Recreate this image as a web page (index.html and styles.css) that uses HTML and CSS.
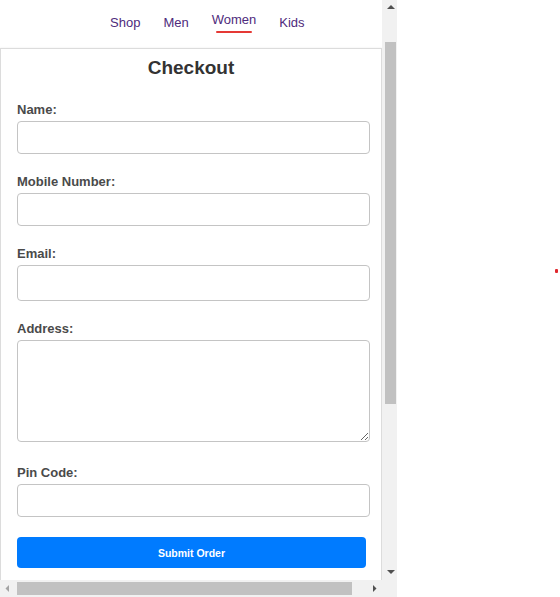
FILE: index.html
```html
<!DOCTYPE html>
<html lang="en">
<head>
<meta charset="utf-8">
<title>Checkout</title>
<link rel="stylesheet" href="styles.css">
</head>
<body>
<div class="frame">
  <div class="page">
    <nav class="nav">
      <a class="nav-link">Shop</a>
      <a class="nav-link">Men</a>
      <a class="nav-link active">Women</a>
      <a class="nav-link">Kids</a>
    </nav>
    <form class="card">
      <h1 class="title">Checkout</h1>
      <div class="field">
        <label class="label">Name:</label>
        <input class="input" type="text">
      </div>
      <div class="field">
        <label class="label">Mobile Number:</label>
        <input class="input" type="text">
      </div>
      <div class="field">
        <label class="label">Email:</label>
        <input class="input input-email" type="text">
      </div>
      <div class="field">
        <label class="label">Address:</label>
        <textarea class="input textarea"></textarea>
      </div>
      <div class="field field-pin">
        <label class="label">Pin Code:</label>
        <input class="input" type="text">
      </div>
      <button class="submit" type="button">Submit Order</button>
    </form>
  </div>
  <div class="vscroll">
    <div class="sb-btn">
      <svg width="15" height="17" viewBox="0 0 15 17"><polygon points="5,9 13,9 9,5" fill="#505050"/></svg>
    </div>
    <div class="vtrack"><div class="vthumb"></div></div>
    <div class="sb-btn">
      <svg width="15" height="17" viewBox="0 0 15 17"><polygon points="5,7 13,7 9,11" fill="#505050"/></svg>
    </div>
  </div>
  <div class="hscroll">
    <div class="sb-btn">
      <svg width="17" height="17" viewBox="0 0 17 17"><polygon points="9,5 9,12 5.5,8.5" fill="#a3a3a3"/></svg>
    </div>
    <div class="htrack"><div class="hthumb"></div></div>
    <div class="sb-btn">
      <svg width="17" height="17" viewBox="0 0 17 17"><polygon points="8,5 8,12 11.5,8.5" fill="#505050"/></svg>
    </div>
  </div>
  <div class="sb-corner"></div>
</div>
<span class="dot"></span>
</body>
</html>
```
FILE: styles.css
```css
* { box-sizing: border-box; }
html, body { margin: 0; padding: 0; background: #fff; }
body { font-family: "Liberation Sans", Arial, sans-serif; position: relative; width: 560px; height: 597px; overflow: hidden; }

.frame {
  position: relative;
  width: 397px;
  height: 597px;
  overflow: hidden;
  background: #fff;
}

/* scrollbars (drawn over the frame edge) */
.vscroll {
  position: absolute;
  left: 382px;
  top: 0;
  width: 15px;
  height: 580px;
  background: #f1f1f1;
  display: flex;
  flex-direction: column;
}
.vscroll .sb-btn { height: 17px; flex: none; }
.vtrack { flex: 1; padding-top: 25px; padding-left: 3px; padding-right: 1px; }
.vthumb { height: 362px; background: #c1c1c1; }
.hscroll {
  position: absolute;
  left: 0;
  top: 580px;
  width: 382px;
  height: 17px;
  background: #f1f1f1;
  display: flex;
}
.hscroll .sb-btn { width: 17px; flex: none; }
.htrack { flex: 1; padding-top: 2px; padding-bottom: 2px; }
.hthumb { width: 335px; height: 100%; background: #c1c1c1; }
.sb-btn svg { display: block; }
.sb-corner {
  position: absolute;
  left: 382px;
  top: 580px;
  width: 15px;
  height: 17px;
  background: #f1f1f1;
}

.page {
  width: 397px;
  padding-top: 15px;
}
.nav {
  display: flex;
  gap: 23px;
  padding-left: 110px;
  height: 33px;
  align-items: flex-start;
}
.nav-link {
  font-size: 13px;
  line-height: 15px;
  color: #4e2b7c;
  text-decoration: none;
  padding-bottom: 6px;
}
.nav-link.active {
  transform: translateY(-3px);
  position: relative;
}
.nav-link.active::after {
  content: "";
  position: absolute;
  left: 4px;
  right: 4px;
  bottom: 0;
  height: 2px;
  background: #e53935;
  border-radius: 1px;
}
.card {
  width: 382px;
  height: 600px;
  border: 1px solid #dcdcdc;
  border-bottom: none;
  box-shadow: 0 0 2px rgba(0,0,0,0.08);
  padding: 8px 0 0 16px;
  display: flex;
  flex-direction: column;
  align-items: flex-start;
}
.title {
  align-self: stretch;
  margin: 0 0 22px -16px;
  text-align: center;
  font-size: 19px;
  line-height: 22px;
  font-weight: bold;
  color: #333;
}
.field {
  display: flex;
  flex-direction: column;
  margin-bottom: 19px;
}
.field-pin { margin-bottom: 20px; }
.label {
  font-size: 13px;
  line-height: 16px;
  font-weight: bold;
  color: #4a4a4a;
  padding-top: 1px;
  margin-bottom: 3px;
}
.input {
  width: 353px;
  height: 33px;
  border: 1px solid #c4c4c4;
  border-radius: 4px;
  background: #fff;
  font-family: inherit;
  font-size: 13px;
  padding: 6px 8px;
  margin: 0;
}
.input-email { height: 36px; }
.textarea {
  height: 102px;
  resize: vertical;
  margin-bottom: 3px;
}
.submit {
  width: 349px;
  height: 31px;
  border: none;
  border-radius: 4px;
  background: #007bff;
  color: #fff;
  font-family: inherit;
  font-size: 10.5px;
  font-weight: bold;
  padding: 0;
}
.dot {
  position: absolute;
  left: 555px;
  top: 269px;
  width: 3px;
  height: 4px;
  border-radius: 1px;
  background: #e0282e;
}
```
